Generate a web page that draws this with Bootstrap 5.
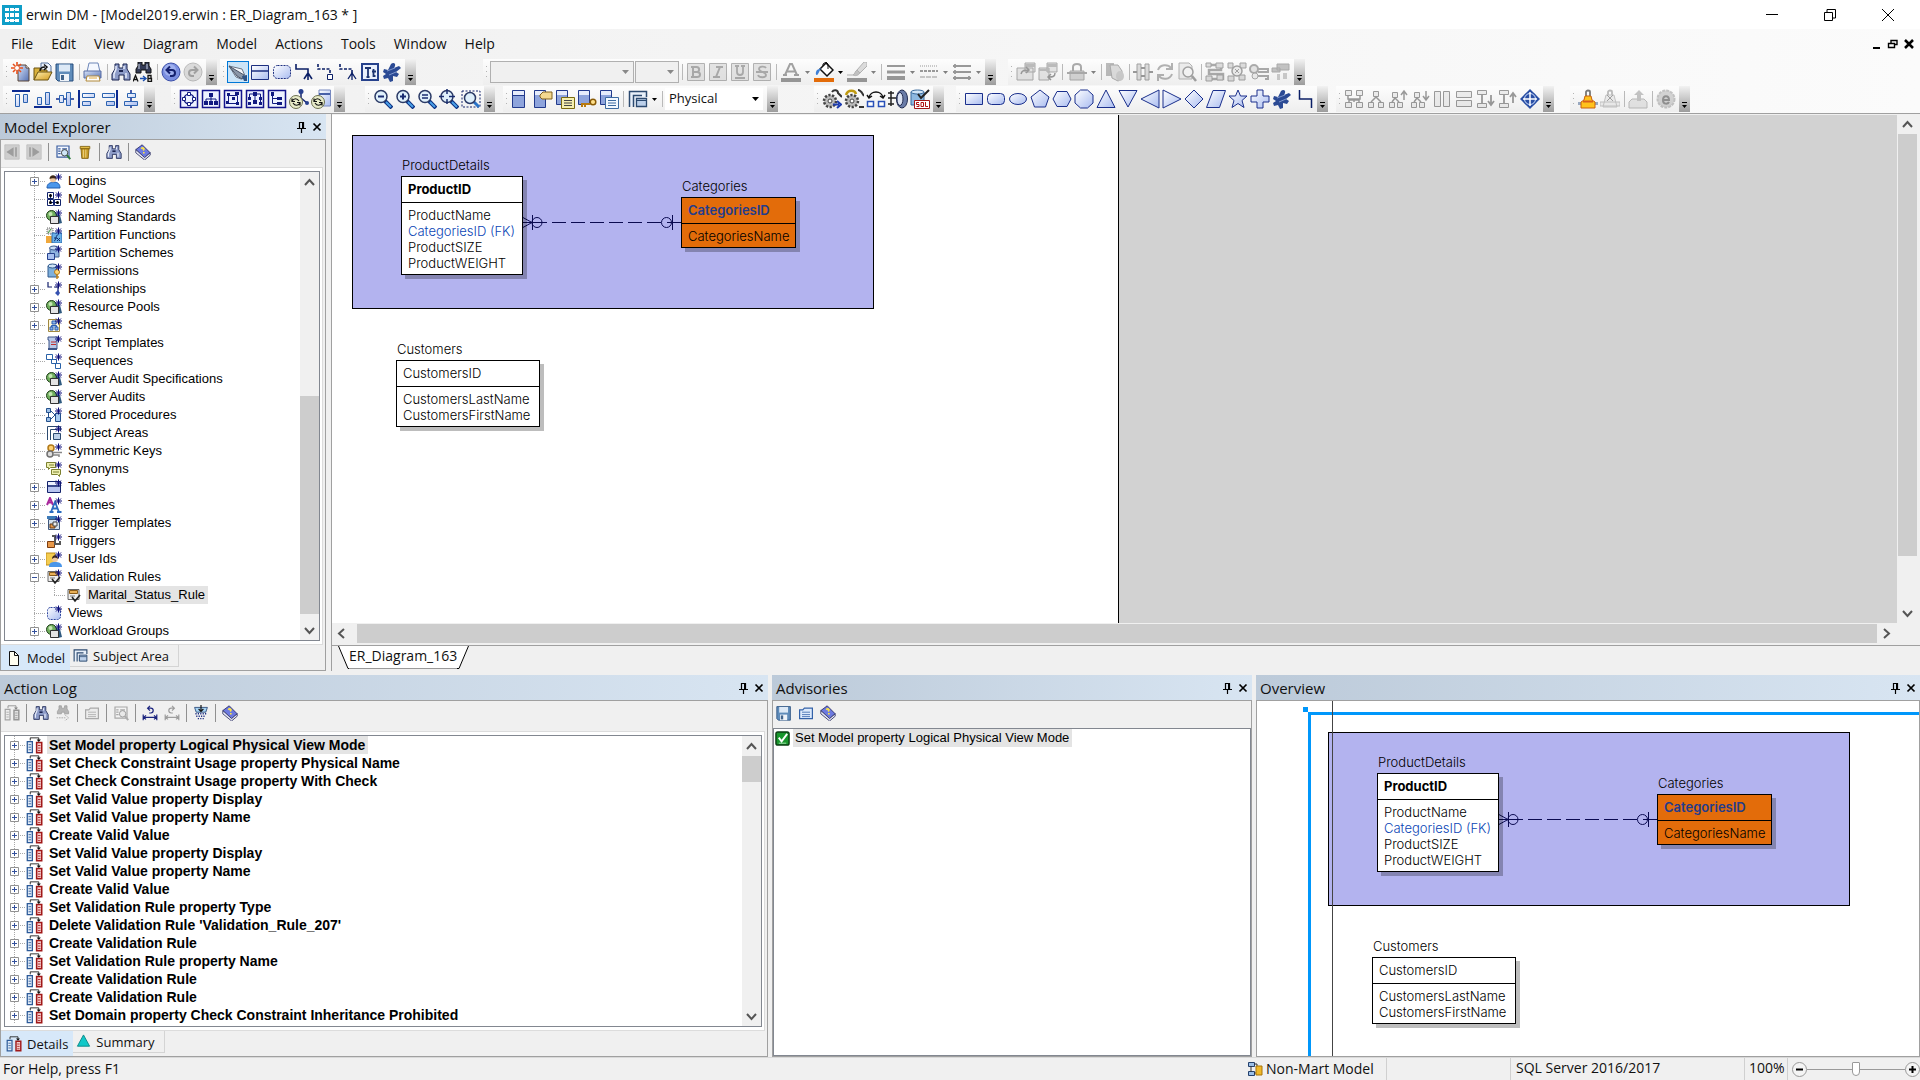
<!DOCTYPE html>
<html lang="en">
<head>
<meta charset="utf-8">
<meta name="viewport" content="width=device-width, initial-scale=1">
<title>erwin DM - [Model2019.erwin : ER_Diagram_163 * ]</title>
<link href="https://cdn.jsdelivr.net/npm/bootstrap@5.3.0/dist/css/bootstrap.min.css" rel="stylesheet">
<script src="https://cdn.jsdelivr.net/npm/bootstrap@5.3.0/dist/js/bootstrap.bundle.min.js"></script>
<style>
  :root { --face:#f0f0f0; --edge:#a0a0a0; --edge-dark:#828790; --ui:"Open Sans","Noto Sans",sans-serif; --list:"Liberation Sans",Arial,sans-serif; }
  body { background:var(--face); color:#111; font:14px/20px var(--ui); min-height:100vh; }
  button { color:inherit; font:inherit; background:none; border:0; padding:0; }
  svg { display:block; }

  .titlebar { background:#fff; height:29px; padding:0 3px 0 2px; }
  .titlebar h1 { font-size:14px; line-height:20px; font-weight:400; margin:0; }
  .win-ctl { width:58px; height:29px; }
  .chrome { background:linear-gradient(90deg,#f0f0f0,#fbfbfb); border-bottom:1px solid var(--edge); }
  .menubar { height:30px; padding:0 3px 0 2px; }
  .menubar a { color:#111; text-decoration:none; padding:0 9px; }
  .mdi-ctl { width:16px; height:16px; }

  .bar-row { height:27px; padding-left:3px; }
  .strip { height:26px; background:linear-gradient(#fdfdfd,#eeeeee); }
  .grip { width:7px; height:16px; background:radial-gradient(circle,#b4b4b4 1px,transparent 1px) 2px 0/3px 5px repeat-y; }
  .tool { width:22px; height:22px; }
  .tool.wide { width:33px; }
  .tool.picked { background:#cce4f7; outline:1px solid #0078d7; outline-offset:-1px; }
  .tool.off svg { filter:grayscale(1); opacity:.48; }
  .split { width:6px; height:16px; background:linear-gradient(#b9b9b9,#b9b9b9) center/1px 100% no-repeat; }
  .more { width:11px; height:26px; margin-left:2px; background:linear-gradient(#f2f2f2,#9c9c9c); }
  .g3 { margin-left:3px; } .g8 { margin-left:8px; } .g12 { margin-left:12px; } .g16 { margin-left:16px; } .g20 { margin-left:20px; } .g36 { margin-left:36px; } .g67 { margin-left:67px; }
  .combo { appearance:none; height:22px; border:1px solid #b0b0b0; border-radius:0; color:#111; font:13px/18px var(--ui); padding:0 4px 2px 3px; background:#f0f0f0 url("data:image/svg+xml,%3Csvg xmlns='http://www.w3.org/2000/svg' width='7' height='4'%3E%3Cpath d='M0 0h7L3.5 4z' fill='%23888'/%3E%3C/svg%3E") right 4px center no-repeat; }
  .combo.live { background:#fff url("data:image/svg+xml,%3Csvg xmlns='http://www.w3.org/2000/svg' width='7' height='4'%3E%3Cpath d='M0 0h7L3.5 4z' fill='%23000'/%3E%3C/svg%3E") right 3px center no-repeat; border-color:#fff; width:98px; margin-right:2px; opacity:1; }
  .w-face { width:144px; margin-right:1px; } .w-size { width:44px; }

  .pane-head { height:25px; background:linear-gradient(90deg,#bccad9,#d8e5f2); padding:0 1px 0 4px; }
  .pane-head h2 { font-size:15px; line-height:22px; font-weight:400; margin:0; }
  .pane-head button { width:16px; height:16px; }
  .pane-body { border:1px solid var(--edge); background:var(--face); }
  .mini { padding:0 0 3px; height:27px; }
  .mini.roomy { margin-bottom:3px; }
  .mini .tool { width:22px; }
  .mini .split { width:7px; height:18px; background-image:linear-gradient(#909090,#909090); }

  .explorer { width:326px; }
  .frame { background:#fff; border:1px solid #dcdcdc; border-left:0; padding:3px 2px 3px 3px; margin-right:2px; }
  .listbox { border:1px solid var(--edge-dark); background:#fff; font:13px/18px var(--list); color:#000; }
  .listbox ul { margin:0; padding:0; list-style:none; }
  .rowline { height:18px; white-space:nowrap; }
  .twig { width:16px; height:18px; padding-top:5px; background:
      repeating-linear-gradient(#a8a8a8 0 1px,transparent 1px 2px) 4px 0/1px 18px no-repeat,
      repeating-linear-gradient(90deg,#a8a8a8 0 1px,transparent 1px 2px) 4px 9px/12px 1px no-repeat; }
  .twig.thru { background:repeating-linear-gradient(#a8a8a8 0 1px,transparent 1px 2px) 4px 0/1px 18px no-repeat; }
  .twig.leaf { background:
      repeating-linear-gradient(#a8a8a8 0 1px,transparent 1px 2px) 4px 0/1px 10px no-repeat,
      repeating-linear-gradient(90deg,#a8a8a8 0 1px,transparent 1px 2px) 4px 9px/12px 1px no-repeat; }
  .caption { padding:0 3px 0 2px; }
  .picked-row .caption { background:#e4e4e4; }
  .adv-row { padding-left:1px; }
  .adv-row .caption { margin-left:3px; }
  .listbox .tree { padding-left:25px; }
  .listbox .log { padding-left:5px; font-weight:700; font-size:14px; }

  .vbar { width:19px; background:var(--face); }
  .desk-bar { margin:0 3px 0 1px; }
  .vbar button, .hbar button { width:19px; height:20px; }
  .hbar { height:19px; background:var(--face); margin:1px 24px 2px 0; }
  .thumb { background:#cdcdcd; }
  .spread-204 { flex:204 0 0; } .spread-219 { flex:219 0 0; } .spread-6 { flex:6 0 0; } .spread-419 { flex:419 0 0; } .spread-47 { flex:47 0 0; }
  .spread-26 { flex:26 0 0; } .spread-224 { flex:224 0 0; } .spread-1518 { flex:1518 0 0; }

  .pane-tab { font-size:13px; height:22px; border-right:1px solid #d4d4d4; border-bottom:1px solid #d4d4d4; padding:0 9px 0 3px; gap:5px; }
  .pane-tab.on { background:#d7e8f9; height:25px; border:0; padding:0 5px; }

  .canvas-pane { margin-left:5px; border-left:1px solid var(--edge); }
  .desk { background:#d2d2d2; margin-top:1px; }
  .paper { width:787px; background:#fff; border-right:1px solid #000; }
  .sheet-tabs { height:26px; border-top:1px solid var(--edge); padding-left:6px; }
  .sheet-tab span { background:#fff; border-bottom:1px solid #999; height:23px; line-height:20px; }

  .erd { position:absolute; width:522px; height:174px; background:#b3b3ef; border:1px solid #000; font:300 13px/16px Inter,"Open Sans",sans-serif; color:#000; }
  .at-page { left:20px; top:20px; }
  .at-view { left:71px; top:31px; }
  .entity { position:absolute; }
  .e-product { left:48px; top:21px; width:122px; }
  .e-category { left:328px; top:42px; width:115px; }
  .e-customer { left:43px; top:205px; width:144px; }
  .entity h3 { font:inherit; margin:0 0 3px 1px; }
  .sheet { border:1px solid #000; background:#fff; box-shadow:4px 4px 0 rgba(0,0,0,.26); }
  .sheet .keys { height:26px; line-height:24px; border-bottom:1px solid #000; padding-left:6px; }
  .sheet .cols { padding:4px 0 3px 6px; white-space:nowrap; }
  .fk { color:#0a45b5; }
  .orange { background:#e36c0a; }
  .orange .keys { color:#233c8c; font-weight:600; }
  .link-line { position:absolute; left:169px; top:79px; }

  .dock { gap:4px; margin-top:4px; height:382px; }
  .dock-log { flex:0 0 40%; } .dock-adv { flex:0 0 25%; }
  .mark-v { position:absolute; left:75px; top:0; bottom:0; width:1px; background:#444; }
  .view-box { position:absolute; left:51px; top:11px; right:0; bottom:0; border:solid #0097fb; border-width:3px 0 0 3px; }
  .view-dot { position:absolute; left:46px; top:6px; width:5px; height:5px; background:#0097fb; }

  .status { height:23px; border-top:1px solid #d9d9d9; padding-left:3px; }
  .status .cell { border-left:1px solid #d0d0d0; height:22px; }
  .s-mart { width:138px; } .s-gap { width:124px; } .s-db { width:234px; padding-left:5px; } .s-zoom { width:43px; padding-left:4px; }
  .zoom { appearance:none; width:98px; height:16px; background:linear-gradient(#9a9a9a,#9a9a9a) center/100% 1px no-repeat; margin:0; }
  .zoom::-webkit-slider-thumb { appearance:none; width:8px; height:14px; background:#fff; border:1px solid #999; border-radius:1px 1px 4px 4px; }
</style>
</head>
<body class="d-flex flex-column overflow-hidden">

<svg width="0" height="0" class="position-absolute" aria-hidden="true">
  <defs>
    <linearGradient id="gs" x1="0" y1="0" x2="1" y2="1"><stop offset="0" stop-color="#fff"/><stop offset="1" stop-color="#a9bcf0"/></linearGradient>
    <linearGradient id="gb" x1="0" y1="0" x2="1" y2="1"><stop offset="0" stop-color="#dbe6fa"/><stop offset="1" stop-color="#5470b4"/></linearGradient>
    <linearGradient id="gy" x1="0" y1="0" x2="1" y2="1"><stop offset="0" stop-color="#fff0b0"/><stop offset="1" stop-color="#d29a1c"/></linearGradient>
  </defs>
  <!-- standard -->
  <symbol id="new" viewBox="0 0 20 20"><path d="M7 3h8l3 3v13H7z" fill="url(#gb)" stroke="#5a4638"/><path d="M15 3v3h3" fill="#fff" stroke="#5a4638"/><path d="M6 0v12M0 6h12M2 2l8 8M10 2l-8 8" stroke="#e8501c" stroke-width="1.6"/><circle cx="6" cy="6" r="2" fill="#fff"/></symbol>
  <symbol id="open" viewBox="0 0 20 20"><path d="M8 1h7l3 3v8H8z" fill="#eef4ff" stroke="#55709c"/><path d="M1 18V6h6l1 2h6v2" fill="#d9b13c" stroke="#6a5310"/><path d="M1 18l4-8h14l-4 8z" fill="url(#gy)" stroke="#6a5310"/><path d="M7 9c0-3 2-4 5-4M11 2.500l3 2.500-3 3" fill="none" stroke="#111" stroke-width="1.500"/></symbol>
  <symbol id="save" viewBox="0 0 20 20"><path d="M1 2h17v17H3l-2-2z" fill="#5f8cba" stroke="#274d7c"/><path d="M4 2.500h11v7H4z" fill="#dde9f6"/><path d="M5 12h9v7H5z" fill="#eef3f9"/><path d="M6 13h3v5H6z" fill="#41648c"/></symbol>
  <symbol id="print" viewBox="0 0 20 20"><path d="M6 1h9l2 9H4z" fill="#f4f8ff" stroke="#6d86b8"/><path d="M1 9h17v7H1z" fill="url(#gb)" stroke="#5a6ea4"/><path d="M4 14h12l1 5H3z" fill="#fff" stroke="#b08838"/><path d="M6 16h8" stroke="#e0a83c"/></symbol>
  <symbol id="find" viewBox="0 0 20 20"><path d="M4 2h4v4h4V2h4v5l3 5v6h-6v-5H8v5H1v-6l3-5z" fill="#8d9cc8" stroke="#1b2450"/><path d="M5 4v3l-2 5v4M13 4v3M15 11v5" stroke="#e6ecfa" stroke-width="1.500" fill="none"/><path d="M8 9h4" stroke="#1b2450" stroke-width="2"/></symbol>
  <symbol id="replace" viewBox="0 0 20 20"><path d="M5 0h4v3h3V0h4v4l2 3v4h-5V8H8v3H3V7l2-3z" fill="#333a55" stroke="#111"/><path d="M6 2v5M14 2v5" stroke="#cfd8ee"/><path d="M0 19.500l2.500-6 2.500 6M1 17.500h3" fill="none" stroke="#111" stroke-width="1.300"/><path d="M15 13.500v6h3.500v-3H15h3v-3z" fill="none" stroke="#111" stroke-width="1.300"/><path d="M7 16.500h5M10 14l3 2.500-3 2.500" fill="none" stroke="#1a4fb0" stroke-width="1.400"/></symbol>
  <symbol id="undo" viewBox="0 0 20 20"><circle cx="10" cy="10" r="9" fill="#7a8ee0" stroke="#3a4ea8"/><circle cx="9" cy="8" r="6" fill="#b8c6f6" opacity=".6"/><path d="M6 8h5c4 0 4 6 0 6H9M9 4.500L5.500 8 9 11.500" fill="none" stroke="#14206e" stroke-width="2"/></symbol>
  <symbol id="redo" viewBox="0 0 20 20"><circle cx="10" cy="10" r="9" fill="#bbb" stroke="#777"/><path d="M14 8H9c-4 0-4 6 0 6h2M11 4.500L14.500 8 11 11.500" fill="none" stroke="#444" stroke-width="2"/></symbol>
  <!-- toolbox -->
  <symbol id="pointer" viewBox="0 0 20 20"><path d="M1 4l13 3 4 9-5 1-5-2z" fill="#f4f6fa" stroke="#6a7484"/><path d="M1 4l8 10 5 3 2-4-5-3z" fill="#8b97a8" stroke="#4a5568"/><path d="M14 14l5-1v6h-3z" fill="#2f5486"/></symbol>
  <symbol id="table" viewBox="0 0 20 20"><path d="M1.500 3.500h17v14h-17z" fill="url(#gs)" stroke="#1d2f80"/><path d="M2 9h16" stroke="#1d2f80" stroke-width="1.500"/></symbol>
  <symbol id="view" viewBox="0 0 20 20"><rect x="1.500" y="3.500" width="17" height="13" rx="4" fill="url(#gs)" stroke="#1d2f80" stroke-dasharray="2 1"/></symbol>
  <symbol id="rel1" viewBox="0 0 20 20"><path d="M2 2v5h12v5M10 17l4-6 4 6M14 12v6" fill="none" stroke="#0b1f66" stroke-width="1.600"/></symbol>
  <symbol id="rel2" viewBox="0 0 20 20"><path d="M2 2v5h12v5" fill="none" stroke="#0b1f66" stroke-width="1.600" stroke-dasharray="3 1.500"/><path d="M11.500 12.500h5v5h-5z" fill="#fff" stroke="#0b1f66"/></symbol>
  <symbol id="rel3" viewBox="0 0 20 20"><path d="M2 2v5h12v4" fill="none" stroke="#0b1f66" stroke-width="1.600" stroke-dasharray="3 1.500"/><path d="M10 17l4-6 4 6M14 12v6" fill="none" stroke="#0b1f66" stroke-width="1.300"/></symbol>
  <symbol id="text" viewBox="0 0 20 20"><path d="M2 2h16v16H2z" fill="#eaf0fc" stroke="#26418c" stroke-width="2"/><path d="M5 6h6M8 6v9M6.500 15h3M13.500 7v7h2M12 9.500h4" stroke="#1d3470" stroke-width="1.800" fill="none"/></symbol>
  <symbol id="anno" viewBox="0 0 20 20"><path d="M9 2c2-2 5-1 4 2l-1 2 5-2 2 2-5 4 3 2-2 3-4-1 0 5-3 1-2-4-4 1-1-3 3-2-3-2 1-3 4 1z" fill="#2b4a94"/><path d="M5 9l8-3M7 13l7-3" stroke="#7f97cc"/></symbol>
  <!-- font bar -->
  <symbol id="bold" viewBox="0 0 20 20"><path d="M1.500 1.500h17v17h-17z" fill="#ccc" stroke="#666"/><path d="M7 5v10h4c4 0 4-5 0-5H7h3.500c3.500 0 3.500-5 0-5zM5 5h3M5 15h3" fill="none" stroke="#555" stroke-width="2"/></symbol>
  <symbol id="italic" viewBox="0 0 20 20"><path d="M1.500 1.500h17v17h-17z" fill="#ccc" stroke="#666"/><path d="M8 5h7M5 15h7M12 5L8 15" stroke="#555" stroke-width="2"/></symbol>
  <symbol id="underline" viewBox="0 0 20 20"><path d="M1.500 1.500h17v17h-17z" fill="#ccc" stroke="#666"/><path d="M5 4h4M11 4h4M7 4v6c0 4 6 4 6 0V4M5 16h10" stroke="#555" stroke-width="1.800" fill="none"/></symbol>
  <symbol id="strike" viewBox="0 0 20 20"><path d="M1.500 1.500h17v17h-17z" fill="#ccc" stroke="#666"/><path d="M14 6c-1-2-7-2-7 1s7 3 7 6-7 3-8 0M4 10h12" stroke="#555" stroke-width="1.800" fill="none"/></symbol>
  <symbol id="fontcolor" viewBox="0 0 20 20"><path d="M0 16h20v4H0z" fill="#333"/><path d="M4 13l5-11h2l5 11M6 9.500h8M2 13h4M13 13h5" stroke="#444" stroke-width="2" fill="none"/></symbol>
  <symbol id="fill" viewBox="0 0 20 20"><path d="M0 16h20v4H0z" fill="#e36c0a"/><path d="M6 7l6-6 7 7-6 6z" fill="#fff" stroke="#111" stroke-width="1.500"/><path d="M9 4V2l3-2 2 2v5" fill="none" stroke="#111"/><path d="M3 8c-2 3-1 5 0 5s3-5 4-7z" fill="#3d7fd6"/></symbol>
  <symbol id="brush" viewBox="0 0 20 20"><path d="M0 16h20v4H0z" fill="#333"/><path d="M10 8l7-8h3v4l-7 7z" fill="#bbb" stroke="#666"/><path d="M10 8l3 3c-2 3-5 3-7 2 2-1 2-4 4-5zM0 13h6" fill="#888" stroke="#666"/></symbol>
  <symbol id="lines" viewBox="0 0 20 20"><path d="M1 4h18" stroke="#333" stroke-width="2"/><path d="M1 10h18" stroke="#333" stroke-width="3"/><path d="M1 16h18" stroke="#333" stroke-width="4"/></symbol>
  <symbol id="dashes" viewBox="0 0 20 20"><path d="M1 4h18" stroke="#333" stroke-dasharray="1 1"/><path d="M1 9h18" stroke="#333" stroke-width="2" stroke-dasharray="3 1"/><path d="M1 15h18" stroke="#333" stroke-width="1" stroke-dasharray="5 1"/></symbol>
  <symbol id="ends" viewBox="0 0 20 20"><path d="M1 4h18M1 10h18M1 16h18M3 2v4M3 8v4M17 14v4M3 14v4" stroke="#333" stroke-width="1.800"/></symbol>
  <!-- grey groups -->
  <symbol id="fwd" viewBox="0 0 20 20"><path d="M9 1h10v9H9zM1 6h16v12H1z" fill="#ccc" stroke="#555"/><path d="M9 2h10v3H9z" fill="#777"/><path d="M5 12c1-4 4-4 7-4M10 5l3 3-3 3" fill="none" stroke="#333" stroke-width="1.500"/></symbol>
  <symbol id="back" viewBox="0 0 20 20"><path d="M9 1h10v9H9zM1 6h10v12H1z" fill="#ccc" stroke="#555"/><path d="M9 2h10v3H9zM1 7h10v2H1z" fill="#777"/><path d="M17 11c0 4-3 4-6 4M13 12l-3 3 3 3" fill="none" stroke="#333" stroke-width="1.500"/></symbol>
  <symbol id="lockg" viewBox="0 0 20 20"><path d="M6 9V5c0-4 8-4 8 0v4" fill="none" stroke="#555" stroke-width="2"/><path d="M3 9h14v9H3z" fill="#aaa" stroke="#555"/><path d="M0 11h20" stroke="#555" stroke-width="2"/></symbol>
  <symbol id="shield" viewBox="0 0 20 20"><path d="M1 1h8v13H1z" fill="#777"/><path d="M5 3h8l4 6v8l-4 2-6-3z" fill="#bbb" stroke="#555"/><ellipse cx="15" cy="14" rx="4" ry="5" fill="#999"/></symbol>
  <symbol id="cmp" viewBox="0 0 20 20"><path d="M4 2h4v16H4zM12 2h4v16h-4z" fill="#bbb" stroke="#444"/><path d="M0 10h4M16 10h4M8 6h4M8 14h4" stroke="#333" stroke-width="2"/></symbol>
  <symbol id="sync" viewBox="0 0 20 20"><path d="M3 8c2-6 10-6 13-2M17 1v6h-6M17 12c-2 6-10 6-13 2M3 19v-6h6" fill="none" stroke="#666" stroke-width="2"/></symbol>
  <symbol id="look" viewBox="0 0 20 20"><path d="M2 1h10l3 3v13H2z" fill="#ddd" stroke="#666"/><circle cx="11" cy="10" r="5" fill="#eee" stroke="#444" stroke-width="1.500"/><path d="M15 14l4 5" stroke="#444" stroke-width="2.500"/></symbol>
  <symbol id="net1" viewBox="0 0 20 20"><path d="M2 3h14v5H4v4h14v5H3" fill="none" stroke="#555" stroke-width="2.500"/><path d="M1 1h5v4H1zM11 1h7v5h-7zM1 14h6v5H1zM12 13h6v5h-6z" fill="#bbb" stroke="#444"/></symbol>
  <symbol id="net2" viewBox="0 0 20 20"><path d="M1 1h5v5H1zM13 1h6v5h-6zM1 14h6v5H1zM12 13h6v5h-6z" fill="#bbb" stroke="#444"/><circle cx="10" cy="9" r="5" fill="#ddd" stroke="#444" stroke-width="1.500"/><path d="M8 7l4 4M12 7l-4 4" stroke="#444"/></symbol>
  <symbol id="keyg" viewBox="0 0 20 20"><circle cx="5" cy="7" r="4" fill="#ccc" stroke="#555" stroke-width="2"/><path d="M8 7h11v3H9M5 14h14v3h-3" fill="none" stroke="#555" stroke-width="2"/><circle cx="6" cy="14" r="3" fill="#ddd" stroke="#555"/></symbol>
  <symbol id="tree4" viewBox="0 0 20 20"><path d="M6 2h12v6H6zM1 6h8v4H1z" fill="#888" stroke="#555"/><path d="M6 12h3v6H6zM12 11h4v6h-4z" fill="#999"/></symbol>
  <!-- align -->
  <symbol id="al-t" viewBox="0 0 20 20"><path d="M1 2h18" stroke="#0c2a90" stroke-width="2"/><path d="M4.500 5.500h4v12h-4zM12.500 5.500h4v8h-4z" fill="url(#gs)" stroke="#2c63b0"/></symbol>
  <symbol id="al-b" viewBox="0 0 20 20"><path d="M1 18h18" stroke="#0c2a90" stroke-width="2"/><path d="M4.500 8.500h4v7h-4zM12.500 3.500h4v12h-4z" fill="url(#gs)" stroke="#2c63b0"/></symbol>
  <symbol id="al-m" viewBox="0 0 20 20"><path d="M1 10h18" stroke="#0c2a90" stroke-width="1.500"/><path d="M4.500 6.500h4v7h-4zM11.500 3.500h4v13h-4z" fill="url(#gs)" stroke="#2c63b0"/></symbol>
  <symbol id="al-l" viewBox="0 0 20 20"><path d="M2 1v18" stroke="#0c2a90" stroke-width="2"/><path d="M5.500 4.500h12v4h-12zM5.500 12.500h8v4h-8z" fill="url(#gs)" stroke="#2c63b0"/></symbol>
  <symbol id="al-r" viewBox="0 0 20 20"><path d="M18 1v18" stroke="#0c2a90" stroke-width="2"/><path d="M3.500 4.500h12v4h-12zM7.500 12.500h8v4h-8z" fill="url(#gs)" stroke="#2c63b0"/></symbol>
  <symbol id="al-c" viewBox="0 0 20 20"><path d="M10 1v18" stroke="#0c2a90" stroke-width="1.500"/><path d="M6.500 4.500h8v4h-8zM3.500 12.500h13v4h-13z" fill="url(#gs)" stroke="#2c63b0"/></symbol>
  <!-- layout -->
  <symbol id="boxf" viewBox="0 0 20 20"><path d="M1.500 1.500h17v17h-17z" fill="#eef2ff" stroke="#14148c" stroke-width="1.500"/></symbol>
  <symbol id="ly1" viewBox="0 0 20 20"><use href="#boxf"/><circle cx="10" cy="10" r="5" fill="none" stroke="#111a80" stroke-width="1.200"/><path d="M8.500 3.500h3v3h-3zM8.500 13.500h3v3h-3zM3.500 8.500h3v3h-3zM13.500 8.500h3v3h-3z" fill="#fff" stroke="#111a80"/></symbol>
  <symbol id="ly2" viewBox="0 0 20 20"><use href="#boxf"/><path d="M8 4h4v4H8zM3 12h4v4H3zM8 12h4v4H8zM13 12h4v4h-4z" fill="#111a80"/><path d="M10 7v5M5 12v-2h10v2" fill="none" stroke="#111a80"/></symbol>
  <symbol id="ly3" viewBox="0 0 20 20"><use href="#boxf"/><path d="M4 4h3v3H4zM12 3h4v3h-4zM3 12h3v3H3zM9 8h3v3H9zM13 13h3v3h-3z" fill="#111a80"/><path d="M5.500 6.500h9v8h-9z" fill="none" stroke="#111a80"/></symbol>
  <symbol id="ly4" viewBox="0 0 20 20"><use href="#boxf"/><path d="M8 3h4v4H8zM3 8h3v3H3zM14 8h3v3h-3zM3 13h3v3H3zM8 11h4v4H8zM14 13h3v3h-3z" fill="#111a80"/><path d="M4.500 9V5h11v9M10 5v7" fill="none" stroke="#111a80"/></symbol>
  <symbol id="ly5" viewBox="0 0 20 20"><use href="#boxf"/><path d="M4 3h3v4H4zM10 8h5v3h-5zM10 13h5v3h-5z" fill="#111a80"/><path d="M5.500 6v8.500H12M5.500 9.500H12" fill="none" stroke="#111a80"/></symbol>
  <symbol id="swirl" viewBox="0 0 20 20"><circle cx="7" cy="13" r="6.500" fill="#e9ecc9" stroke="#6c7050"/><path d="M3 12c2-3 5-3 7 0M11 14c-2 3-5 3-7 0M3 9.500v3h3M11 16.500v-3H8" fill="none" stroke="#111" stroke-width="1.200"/></symbol>
  <symbol id="ly6" viewBox="0 0 20 20"><path d="M12 3v6l6 5" stroke="#12236e" stroke-width="1.500" fill="none"/><circle cx="12" cy="2.500" r="2.500" fill="#28408f"/><circle cx="18" cy="14" r="2" fill="#28408f"/><use href="#swirl"/></symbol>
  <symbol id="ly7" viewBox="0 0 20 20"><path d="M8 1h11.500v16H8z" fill="url(#gs)" stroke="#7688bf"/><path d="M8 5h11" stroke="#4860a8" stroke-width="2"/><use href="#swirl"/></symbol>
  <!-- zoom -->
  <symbol id="lens" viewBox="0 0 20 20"><path d="M12 12l7 7" stroke="#0b2f80" stroke-width="4"/><path d="M13 13l5 5" stroke="#4aa0e8" stroke-width="2"/><circle cx="8" cy="7.500" r="6" fill="#dff0fb" stroke="#2b3a66" stroke-width="1.500"/></symbol>
  <symbol id="z-out" viewBox="0 0 20 20"><use href="#lens"/><path d="M5 7.500h6" stroke="#1a2c70" stroke-width="2"/></symbol>
  <symbol id="z-in" viewBox="0 0 20 20"><use href="#lens"/><path d="M5 7.500h6M8 4.500v6" stroke="#1a2c70" stroke-width="2"/></symbol>
  <symbol id="z-100" viewBox="0 0 20 20"><use href="#lens"/><path d="M5 6h6M5 9h6" stroke="#1a2c70" stroke-width="1.300"/></symbol>
  <symbol id="z-fit" viewBox="0 0 20 20"><use href="#lens"/><path d="M8 0v5M8 10v5M0 7.500h5M10 7.500h6" stroke="#1a2c70" stroke-width="1.500"/></symbol>
  <symbol id="z-sel" viewBox="0 0 20 20"><path d="M1 2h18v16H1z" fill="none" stroke="#14246c" stroke-dasharray="2 1.500"/><path d="M13 13l5 5" stroke="#2a74c8" stroke-width="3"/><circle cx="9" cy="9" r="5.500" fill="#dff0fb" stroke="#2b3a66" stroke-width="1.500"/></symbol>
  <!-- display -->
  <symbol id="ent" viewBox="0 0 20 20"><path d="M1.500 1.500h12v17h-12z" fill="#8ea4dc" stroke="#223a8c"/><path d="M2 2h11v4H2z" fill="#e6ecfb"/><path d="M2 6.500h11" stroke="#223a8c"/></symbol>
  <symbol id="ent2" viewBox="0 0 20 20"><path d="M1.500 1.500h11v17h-11z" fill="#8ea4dc" stroke="#223a8c"/><path d="M2 2h10v4H2z" fill="#e6ecfb"/><path d="M7 6l3-3h9v7H9L7 8z" fill="#f3d890" stroke="#80601c"/></symbol>
  <symbol id="ent3" viewBox="0 0 20 20"><path d="M1.500 1.500h11v14h-11z" fill="#8ea4dc" stroke="#223a8c"/><path d="M2 2h10v4H2z" fill="#e6ecfb"/><path d="M6.500 8.500h13v11h-13z" fill="#f5efb0" stroke="#7a6a10"/><path d="M9 11.500h8M9 14h8M9 16.500h8" stroke="#444"/></symbol>
  <symbol id="ent4" viewBox="0 0 20 20"><path d="M1.500 1.500h11v14h-11z" fill="#8ea4dc" stroke="#223a8c"/><path d="M2 2h10v4H2z" fill="#e6ecfb"/><circle cx="16" cy="13" r="2.800" fill="#ffe08a" stroke="#8a5c08" stroke-width="1.500"/><path d="M13 15H5v3M8 15v3" stroke="#b87a10" stroke-width="2" fill="none"/></symbol>
  <symbol id="ent5" viewBox="0 0 20 20"><path d="M1.500 1.500h11v14h-11z" fill="#8ea4dc" stroke="#223a8c"/><path d="M2 2h10v4H2z" fill="#e6ecfb"/><path d="M6.500 8.500h13v11h-13z" fill="#f2f8ff" stroke="#3c6aa0"/><path d="M9 11.500h8M9 14h8M9 16.500h8" stroke="#3c6aa0"/></symbol>
  <symbol id="area" viewBox="0 0 20 20"><path d="M1.500 18V2.500h17V8M5.500 18V6.500H14" fill="#e8f0fa" stroke="#2c4a70" stroke-width="1.500"/><path d="M8.500 9.500h10v8h-10z" fill="#bcd0ea" stroke="#2c4a70" stroke-width="1.300"/><path d="M9 11.500h9" stroke="#2c4a70"/></symbol>
  <!-- database -->
  <symbol id="cog" viewBox="0 0 20 20"><circle cx="8" cy="12" r="6" fill="#bbb" stroke="#444" stroke-width="2.500" stroke-dasharray="2.200 1.500"/><circle cx="8" cy="12" r="2" fill="#fff" stroke="#444"/></symbol>
  <symbol id="db1" viewBox="0 0 20 20"><use href="#cog"/><path d="M10 3c2-3 6-2 6 1l4 4" fill="none" stroke="#333" stroke-width="2"/><path d="M11 15.500h6M15 12l4 3.500-4 3.500" fill="none" stroke="#1d3cb0" stroke-width="2"/></symbol>
  <symbol id="db2" viewBox="0 0 20 20"><use href="#cog"/><path d="M2 6c2-6 9-5 10-1" fill="none" stroke="#c09a10" stroke-width="2.500"/><path d="M14 1c3 0 4 3 6 6M15 18h5" fill="none" stroke="#333" stroke-width="2" /></symbol>
  <symbol id="db3" viewBox="0 0 20 20"><path d="M3 9c1-8 13-8 14 0M1 6l2 3 3-2M19 6l-2 3-3-2" fill="none" stroke="#111" stroke-width="1.500"/><path d="M1.500 12.500h6v5h-6zM12.500 12.500h6v5h-6z" fill="#fff" stroke="#2850b8" stroke-width="1.500"/></symbol>
  <symbol id="db4" viewBox="0 0 20 20"><path d="M0 4h6M0 9h8M0 15h6M3 2v15" stroke="#222" stroke-width="1.500"/><ellipse cx="14" cy="10" rx="5.500" ry="9" fill="#6a7ca8" stroke="#222c50"/><ellipse cx="12" cy="10" rx="3" ry="6.500" fill="#dde4f4" stroke="#222c50"/></symbol>
  <symbol id="db5" viewBox="0 0 20 20"><path d="M1 3h13v13H1z" fill="#8db8e0" stroke="#3a6a9c"/><ellipse cx="7.500" cy="3" rx="6.500" ry="2" fill="#cfe4f6" stroke="#3a6a9c"/><path d="M8 5l3 4 8-8" fill="none" stroke="#222" stroke-width="2"/><path d="M4.500 11.500h15v8h-15z" fill="#fff" stroke="#a01818"/><path d="M9 13.500H6.500v2H9v2H6.500M11 13.500h2.500v4H11zM15.500 13v4.500H18" fill="none" stroke="#b01010"/></symbol>
  <!-- drawing shapes -->
  <symbol id="sh-rect" viewBox="0 0 20 20"><path d="M1.500 4.500h17v11h-17z" fill="url(#gs)" stroke="#1a2f8c"/></symbol>
  <symbol id="sh-round" viewBox="0 0 20 20"><rect x="1.500" y="4.500" width="17" height="11" rx="4" fill="url(#gs)" stroke="#1a2f8c"/></symbol>
  <symbol id="sh-oval" viewBox="0 0 20 20"><ellipse cx="10" cy="10" rx="8.500" ry="5.500" fill="url(#gs)" stroke="#1a2f8c"/></symbol>
  <symbol id="sh-pent" viewBox="0 0 20 20"><path d="M10 1l9 7-3.500 10h-11L1 8z" fill="url(#gs)" stroke="#1a2f8c"/></symbol>
  <symbol id="sh-hex" viewBox="0 0 20 20"><path d="M5 2.500h10l4 7.500-4 7.500H5L1 10z" fill="url(#gs)" stroke="#1a2f8c"/></symbol>
  <symbol id="sh-oct" viewBox="0 0 20 20"><path d="M6.500 1h7L19 6v8l-5.500 5h-7L1 14V6z" fill="url(#gs)" stroke="#1a2f8c"/></symbol>
  <symbol id="sh-up" viewBox="0 0 20 20"><path d="M10 1l9 17.500H1z" fill="url(#gs)" stroke="#1a2f8c"/></symbol>
  <symbol id="sh-down" viewBox="0 0 20 20"><path d="M10 18L1 1.500h18z" fill="url(#gs)" stroke="#1a2f8c"/></symbol>
  <symbol id="sh-left" viewBox="0 0 20 20"><path d="M1 10l18-9v18z" fill="url(#gs)" stroke="#1a2f8c"/></symbol>
  <symbol id="sh-right" viewBox="0 0 20 20"><path d="M19 10L1 1v18z" fill="url(#gs)" stroke="#1a2f8c"/></symbol>
  <symbol id="sh-dia" viewBox="0 0 20 20"><path d="M10 1l9 9-9 9-9-9z" fill="url(#gs)" stroke="#1a2f8c"/></symbol>
  <symbol id="sh-para" viewBox="0 0 20 20"><path d="M7 1.500h12.500l-6 17H.5z" fill="url(#gs)" stroke="#1a2f8c"/></symbol>
  <symbol id="sh-star" viewBox="0 0 20 20"><path d="M10 1l2.500 6H19l-5 4.500 2 7-6-4-6 4 2-7L1 7h6.500z" fill="url(#gs)" stroke="#1a2f8c"/></symbol>
  <symbol id="sh-plus" viewBox="0 0 20 20"><path d="M7 1h6v6h6v6h-6v6H7v-6H1V7h6z" fill="url(#gs)" stroke="#1a2f8c"/></symbol>
  <symbol id="sh-elbow" viewBox="0 0 20 20"><path d="M5.500 1v9h12v9" fill="none" stroke="#0b1f66" stroke-width="1.500"/></symbol>
  <!-- arrange -->
  <symbol id="ar1" viewBox="0 0 20 20"><path d="M1.500 1.500h6v5h-6zM12.500 1.500h6v5h-6zM1.500 13.500h6v5h-6zM12.500 13.500h6v5h-6z" fill="#ddd" stroke="#333"/><path d="M4 7v3h12V7M10 10v3M5 13v-2h10v2" fill="none" stroke="#333" stroke-width="1.500"/></symbol>
  <symbol id="ar2" viewBox="0 0 20 20"><path d="M7.500 2.500h5v5h-5zM2.500 13.500h5v5h-5zM12.500 13.500h5v5h-5z" fill="#ddd" stroke="#333"/><path d="M10 8l-5 5M10 8l5 5" stroke="#333" stroke-width="1.500"/></symbol>
  <symbol id="ar3" viewBox="0 0 20 20"><path d="M4.500 3.500h5v5h-5zM1.500 13.500h5v5h-5zM9.500 13.500h5v5h-5z" fill="#ddd" stroke="#333"/><path d="M7 9l-3 4M7 9l4 4M16 11V3M13 6l3-4 3 4" fill="none" stroke="#333" stroke-width="1.500"/></symbol>
  <symbol id="ar4" viewBox="0 0 20 20"><path d="M4.500 3.500h5v5h-5zM1.500 13.500h5v5h-5zM9.500 13.500h5v5h-5z" fill="#ddd" stroke="#333"/><path d="M7 9l-3 4M7 9l4 4M16 2v8M13 7l3 4 3-4" fill="none" stroke="#333" stroke-width="1.500"/></symbol>
  <symbol id="ar5" viewBox="0 0 20 20"><path d="M2.500 2.500h6v15h-6zM11.500 2.500h6v15h-6z" fill="#ddd" stroke="#333"/></symbol>
  <symbol id="ar6" viewBox="0 0 20 20"><path d="M2.500 2.500h15v6h-15zM2.500 11.500h15v6h-15z" fill="#ddd" stroke="#333"/></symbol>
  <symbol id="ar7" viewBox="0 0 20 20"><path d="M1.500 1.500h9v4h-9zM1.500 14.500h9v4h-9z" fill="#ddd" stroke="#333"/><path d="M6 6v8M15 6v9M12 12l3 4 3-4" fill="none" stroke="#333" stroke-width="1.800"/></symbol>
  <symbol id="ar8" viewBox="0 0 20 20"><path d="M1.500 1.500h9v4h-9zM1.500 14.500h9v4h-9z" fill="#ddd" stroke="#333"/><path d="M6 6v8M15 14V5M12 8l3-4 3 4" fill="none" stroke="#333" stroke-width="1.800"/></symbol>
  <symbol id="target" viewBox="0 0 20 20"><path d="M10 0l10 10-10 10L0 10z" fill="#2a4fa4"/><circle cx="10" cy="10" r="7" fill="#2a4fa4"/><circle cx="10" cy="10" r="5.500" fill="none" stroke="#cfe0ff"/><path d="M10 3v14M3 10h14" stroke="#fff" stroke-width="1.500"/></symbol>
  <!-- mart -->
  <symbol id="m-lock" viewBox="0 0 20 20"><path d="M8 8V3c0-2 4-2 4 0v5" fill="none" stroke="#777" stroke-width="1.800"/><path d="M0 13h20v3H0z" fill="#98a8c0"/><path d="M7 7h6l1 4 3 2v6H3v-6l3-2z" fill="#ffc21c" stroke="#c8600c"/><path d="M5 12.500h10" stroke="#d8601c" stroke-width="2"/></symbol>
  <symbol id="m-free" viewBox="0 0 20 20"><path d="M8 8V3c0-2 4-2 4 0v5" fill="none" stroke="#777" stroke-width="1.800"/><path d="M0 13h20v4H0zM6 6h8l3 12H3z" fill="#ddd" stroke="#888"/><path d="M7 6l6 6M13 6l-6 6" stroke="#444"/></symbol>
  <symbol id="m-up" viewBox="0 0 20 20"><path d="M1 13l3-3h12l3 3v6H1z" fill="#ccc" stroke="#777"/><path d="M9 12V6H6l5-5 5 5h-3v6z" fill="#888"/></symbol>
  <symbol id="m-c" viewBox="0 0 20 20"><circle cx="10" cy="10" r="8.500" fill="#aaa" stroke="#888" stroke-width="2" stroke-dasharray="3 1"/><path d="M7 11h6c0-5-6-5-6 0s5 4 6 2" fill="none" stroke="#222" stroke-width="2"/></symbol>
  <!-- pane tools -->
  <symbol id="prev" viewBox="0 0 20 20"><path d="M1 1h18v18H1z" fill="#aaa" stroke="#888"/><path d="M3 10l9-6v12zM14 4h2v12h-2z" fill="#444"/></symbol>
  <symbol id="next" viewBox="0 0 20 20"><path d="M1 1h18v18H1z" fill="#aaa" stroke="#888"/><path d="M17 10L8 4v12zM4 4h2v12H4z" fill="#444"/></symbol>
  <symbol id="props" viewBox="0 0 20 20"><path d="M2.500 2.500h15v14h-15z" fill="#f4f8ff" stroke="#3a5ea0" stroke-width="1.500"/><path d="M4 6h3M4 9h3M4 12h3M9 6h6" stroke="#3a5ea0" stroke-width="1.500"/><circle cx="12" cy="11" r="4" fill="#cfe6f6" stroke="#222"/><path d="M15 14l4 5" stroke="#2c7a3c" stroke-width="2.500"/></symbol>
  <symbol id="trash" viewBox="0 0 20 20"><path d="M4 3h12v3H4z" fill="#e2bc48" stroke="#7a5a08"/><path d="M5 6h10l-1 12H6z" fill="#c79a24" stroke="#7a5a08"/><path d="M8 7v10M11 7v10" stroke="#f6e09a"/></symbol>
  <symbol id="help" viewBox="0 0 20 20"><path d="M1 7l8-6 10 10-7 6z" fill="#6d7ae0" stroke="#23265c"/><path d="M1 7v4l11 9 7-6v-3l-7 6z" fill="#e8eaf8" stroke="#23265c"/><path d="M8 6c1-2 4-1 3 1l-1 1M11 10v2" stroke="#ffe640" stroke-width="2" fill="none"/></symbol>
  <symbol id="logi" viewBox="0 0 20 20"><path d="M1.500 5.500h6v13h-6z" fill="#e0ebf8" stroke="#2c5a98" stroke-width="1.500"/><path d="M12.500 6.500h6v12h-6z" fill="#f6cccc" stroke="#a01818" stroke-width="1.800"/><path d="M3 9h3M3 12h3M3 15h3" stroke="#2c5a98"/><path d="M14 10h3M14 13h3M14 16h3" stroke="#a01818"/><path d="M5 4V1h10v3" fill="none" stroke="#111"/><path d="M12.500 3h5L15 6z" fill="#111"/></symbol>
  <symbol id="findn" viewBox="0 0 20 20"><path d="M5 1h3v3h4V1h3v4l2 3v3h-5V9H8v2H3V8l2-3z" fill="#777" stroke="#444"/><path d="M2 16h12M12 12l5 4-5 4" fill="none" stroke="#444" stroke-dasharray="2 1"/></symbol>
  <symbol id="note" viewBox="0 0 20 20"><path d="M2 6h4l2-2h10v13H2z" fill="#ddeafc" stroke="#3462a8" stroke-width="1.500"/><path d="M5 9h10M5 12h10M5 14.500h10" stroke="#3462a8"/></symbol>
  <symbol id="lund" viewBox="0 0 20 20"><path d="M1.500 12v7M18.500 12v7M2 15.500h16M5 13l-3 2.500L5 18M15 13l3 2.500-3 2.500M7 4h4c4 0 4 6 0 6H9M10 1L7 4l3 3" fill="none" stroke="#1a237e" stroke-width="1.500"/></symbol>
  <symbol id="lred" viewBox="0 0 20 20"><path d="M1.500 12v7M18.500 12v7M2 15.500h16M5 13l-3 2.500L5 18M15 13l3 2.500-3 2.500M13 4H9C5 4 5 10 9 10h2M10 1l3 3-3 3" fill="none" stroke="#444" stroke-width="1.500"/></symbol>
  <symbol id="filter" viewBox="0 0 20 20"><path d="M2 3h16l-2 6H4z" fill="#a8d4f4" stroke="#1c3c70"/><path d="M10 0v8M7 5l3 3 3-3" stroke="#111" stroke-width="1.500" fill="none"/><path d="M3 11h14M4 14h12M6 17h8" stroke="#1c2c80" stroke-width="1.800" stroke-dasharray="1.500 1.500"/></symbol>
  <!-- tree objects, 16px grid -->
  <symbol id="star8" viewBox="0 0 16 16"><path d="M12.500.5v7M9 4h7M10 1.500l5 5M15 1.500l-5 5" stroke="#0c0c78" stroke-width="1"/></symbol>
  <symbol id="t-user" viewBox="0 0 16 16"><path d="M1 15c0-4 2-5 6-6 5 0 7 2 7 6z" fill="#4a96ea" stroke="#1f5cb0"/><circle cx="7" cy="6" r="3.200" fill="#f0c8a0"/><path d="M3.500 6c0-5 7-5 7 0-2-1-5-1-7 0z" fill="#3c2818"/></symbol>
  <symbol id="t-src" viewBox="0 0 16 16"><path d="M1.500 1.500h6v6h-6zM1.500 8.500h6v6h-6zM8.500 8.500h6v6h-6z" fill="#fff" stroke="#12246c"/><path d="M4.500 3v10M5 11.500h7" stroke="#12246c"/><circle cx="4.500" cy="4.500" r="1.500"/><circle cx="4.500" cy="11.500" r="1.500"/><circle cx="11.500" cy="11.500" r="1.500"/></symbol>
  <symbol id="t-ball" viewBox="0 0 16 16"><path d="M9 5l5 1 2 8-4 1z" fill="#2f5a80"/><circle cx="5.500" cy="6.500" r="5" fill="#6fae5c" stroke="#1e3c1a"/><circle cx="4.500" cy="5" r="2" fill="#c6e6b4"/><path d="M4.500 7.500h8v7h-8z" fill="#e4e4e4" stroke="#333"/></symbol>
  <symbol id="t-fn" viewBox="0 0 16 16"><path d="M1 1h6v6H1z" fill="#ddd" stroke="#666" stroke-dasharray="1 1"/><path d="M0 9h6v7H0z" fill="#f0a83c"/><path d="M6 6h10v10H6z" fill="#6bb0e8" stroke="#2c6ab0"/><path d="M8 14c2 0 2-7 4-6M8 11h3M11 11l3 3M14 11l-3 3" stroke="#102c6c" fill="none"/><path d="M2 6l3-4" stroke="#38a038"/></symbol>
  <symbol id="t-cyl" viewBox="0 0 16 16"><path d="M4 3v9h9V3" fill="#8fb4e0" stroke="#3c5c90"/><ellipse cx="8" cy="3" rx="4.500" ry="2" fill="#c8dcf4" stroke="#3c5c90"/><path d="M1.500 8.500h7v6h-7z" fill="#a8c0f0" stroke="#24408c"/></symbol>
  <symbol id="t-perm" viewBox="0 0 16 16"><path d="M2 3v11h9V3" fill="#7fb0dc" stroke="#30598c"/><ellipse cx="6.500" cy="3" rx="4.500" ry="2" fill="#cfe4f6" stroke="#30598c"/><circle cx="11" cy="9" r="2.500" fill="#ffd878" stroke="#b87818"/><path d="M11 11v5M11 14h2" stroke="#c08420" stroke-width="1.500"/></symbol>
  <symbol id="t-rel" viewBox="0 0 16 16"><path d="M2 1v5h4M8 6h4v6" fill="none" stroke="#14206c" stroke-width="1.200"/><path d="M9 12l3-3 2 3-2 3z" fill="#3450b0"/></symbol>
  <symbol id="t-sch" viewBox="0 0 16 16"><path d="M2.500 2.500h11v12h-11z" fill="#fff8dc" stroke="#a08840"/><path d="M6 4h4v3H6zM4 10h3v3H4zM9 10h3v3H9zM5.500 10V8.500h5V10" fill="#8cb4ec" stroke="#2a5cb0"/></symbol>
  <symbol id="t-scr" viewBox="0 0 16 16"><path d="M2 2h10v3h-1v9H3V5H2z" fill="#b8c8e8" stroke="#3c5488"/><path d="M5 7h5M5 9.500h5" stroke="#c03030"/><path d="M2 14h9" stroke="#3c5488" stroke-width="2"/></symbol>
  <symbol id="t-seq" viewBox="0 0 16 16"><path d="M.5 1.500h6v5h-6zM5.500 6.500h5v4h-5zM9.500 10.500h5v5h-5z" fill="#fff" stroke="#2a62a8"/></symbol>
  <symbol id="t-proc" viewBox="0 0 16 16"><path d="M.5 1.500h4v4h-4zM.5 10.500h4v4h-4z" fill="#9cc0e8" stroke="#24508c"/><path d="M2.500 5v6M5 4l4 4-4 4" stroke="#24508c" fill="none"/><path d="M9.500 6.500h5v8h-5z" fill="#a8ccf0" stroke="#24508c"/></symbol>
  <symbol id="t-area" viewBox="0 0 16 16"><path d="M1.500 15V1.500h13V6M4.500 15V4.500H11" fill="none" stroke="#2c4a70"/><path d="M7.500 8.500h7v6h-7z" fill="#bcd0ea" stroke="#2c4a70"/></symbol>
  <symbol id="t-keys" viewBox="0 0 16 16"><circle cx="5" cy="5" r="3" fill="#ffd070" stroke="#b07818" stroke-width="1.500"/><circle cx="4" cy="11" r="3" fill="#ddd" stroke="#707070" stroke-width="1.500"/><path d="M7 9.500h9M7 12h6v2" stroke="#888" stroke-width="1.500" fill="none"/></symbol>
  <symbol id="t-syn" viewBox="0 0 16 16"><path d="M.5 1.500h9v5h-5l-2 2v-2h-2z" fill="#eef0b0" stroke="#7c8030"/><path d="M5.500 8.500h9v5h-1v2l-2-2h-6z" fill="#eef0b0" stroke="#7c8030"/><path d="M3 4h5M7 11h6" stroke="#7c8030"/></symbol>
  <symbol id="t-tab" viewBox="0 0 16 16"><path d="M1.500 2.500h13v11h-13z" fill="#b8c4f0" stroke="#14246c"/><path d="M2 3h12v3H2z" fill="#eef2ff"/><path d="M2 7h12" stroke="#14246c" stroke-width="1.500"/></symbol>
  <symbol id="t-theme" viewBox="0 0 16 16"><path d="M1 8l3-7 3 7M2 5.500h4" fill="none" stroke="#a8289c" stroke-width="2"/><path d="M5 15l4-10 4 10M6.500 11.500h5M3.500 15h4M11 15h4.500" fill="none" stroke="#2c6cc0" stroke-width="1.800"/></symbol>
  <symbol id="t-tmpl" viewBox="0 0 16 16"><path d="M1 1h10v3H1z" fill="#3c7ab8"/><path d="M2.500 4.500h11v10h-11z" fill="#d4e2f0" stroke="#40587c"/><path d="M4 9h5v4H4z" fill="#e89848" stroke="#603410"/><path d="M7 7h4v4H7z" fill="#eee" stroke="#444"/></symbol>
  <symbol id="t-trig" viewBox="0 0 16 16"><path d="M1.500 8.500h7v6h-7z" fill="#e89848" stroke="#7c3c10"/><path d="M6 3h3v8h5v-3" fill="none" stroke="#555" stroke-width="2"/></symbol>
  <symbol id="t-uid" viewBox="0 0 16 16"><path d="M0 2h9v12H0z" fill="#f4cc50" stroke="#c08c18"/><path d="M3 16c0-4 2-5 6-5s7 1 7 5z" fill="#4a96ea"/><circle cx="9" cy="8" r="3" fill="#f0c8a0"/><path d="M6 8c0-5 6-5 6 0-2-2-4-2-6 0z" fill="#3c2818"/></symbol>
  <symbol id="t-rule" viewBox="0 0 16 16"><path d="M2 2.500h11v10H2z" fill="#eee" stroke="#666"/><path d="M3.500 3.500h8v3h-8z" fill="#e8b058" stroke="#8c5c18"/><path d="M4 9h5" stroke="#777"/><path d="M6 10l3 4 5-6" fill="none" stroke="#222" stroke-width="1.600"/></symbol>
  <symbol id="t-view" viewBox="0 0 16 16"><rect x="1.500" y="2.500" width="13" height="12" rx="3" fill="url(#gs)" stroke="#3048a0" stroke-dasharray="2 1"/></symbol>
  <symbol id="doc" viewBox="0 0 16 16"><path d="M3.500 1.500h5l4 4v10h-9z" fill="#fffef0" stroke="#111"/><path d="M8.500 1.500v4h4" fill="none" stroke="#111"/></symbol>
  <symbol id="tri" viewBox="0 0 16 16"><path d="M8 1l6.500 12h-13z" fill="#10c8c8" stroke="#0a8888"/></symbol>
  <symbol id="ok" viewBox="0 0 16 16"><rect x="1" y="1" width="14" height="14" rx="2" fill="#18962c" stroke="#0a3c12" stroke-width="1.500"/><path d="M4 7l3 4 6-8" fill="none" stroke="#fff" stroke-width="2"/><path d="M4 13h8" stroke="#a8e8b0"/></symbol>
  <symbol id="pin" viewBox="0 0 16 16"><path d="M6.500 3.500h4v6h-4zM4 9.500h9M8.500 10v4" fill="none" stroke="#000" stroke-width="1.200"/><path d="M9.500 3.500v6" stroke="#000"/></symbol>
  <symbol id="ex" viewBox="0 0 16 16"><path d="M4.500 4.500l7 7M11.500 4.500l-7 7" stroke="#000" stroke-width="1.700"/></symbol>
  <symbol id="aup" viewBox="0 0 19 20"><path d="M5 13l4.500-5 4.500 5" fill="none" stroke="#555" stroke-width="2"/></symbol>
  <symbol id="adn" viewBox="0 0 19 20"><path d="M5 8l4.500 5L14 8" fill="none" stroke="#555" stroke-width="2"/></symbol>
  <symbol id="alf" viewBox="0 0 19 20"><path d="M12 5l-5 4.500L12 14" fill="none" stroke="#555" stroke-width="2"/></symbol>
  <symbol id="art" viewBox="0 0 19 20"><path d="M7 5l5 4.500L7 14" fill="none" stroke="#555" stroke-width="2"/></symbol>
</svg>

<header>
  <div class="titlebar d-flex align-items-center">
    <svg width="20" height="20" viewBox="0 0 20 20" aria-hidden="true"><path d="M0 0h20v20H0z" fill="#0f9ec8"/><path d="M3 3h4v3H3zM8 3h4v3H8zM13 3h4v3h-4zM3 8h4v4H3zM8 8h4v4H8zM13 8h4v4h-4zM3 14h4v3H3zM8 14h4v3H8zM13 14h4v3h-4z" fill="#fff"/><path d="M11 4.500h3M4.500 11v4M6 15.500h8" stroke="#fff"/></svg>
    <h1 class="ms-1 me-auto">erwin DM - [Model2019.erwin : ER_Diagram_163 * ]</h1>
    <button class="win-ctl d-flex align-items-center justify-content-center" aria-label="Minimize"><svg width="12" height="12"><path d="M0 5.500h12" stroke="#000"/></svg></button>
    <button class="win-ctl d-flex align-items-center justify-content-center" aria-label="Restore"><svg width="12" height="12"><path d="M.5 3.500h8v8h-8zM3 3V.5h8.500V9H9" fill="none" stroke="#000"/></svg></button>
    <button class="win-ctl d-flex align-items-center justify-content-center" aria-label="Close"><svg width="12" height="12"><path d="M0 0l12 12M12 0L0 12" stroke="#000"/></svg></button>
  </div>
  <div class="chrome">
    <nav class="menubar d-flex align-items-center" aria-label="Menu">
      <a href="#">File</a><a href="#">Edit</a><a href="#">View</a><a href="#">Diagram</a><a href="#">Model</a><a href="#">Actions</a><a href="#">Tools</a><a href="#">Window</a><a href="#" class="me-auto">Help</a>
      <button class="mdi-ctl" aria-label="Minimize diagram"><svg width="16" height="16"><path d="M4 12h7" stroke="#000" stroke-width="2"/></svg></button>
      <button class="mdi-ctl" aria-label="Restore diagram"><svg width="16" height="16"><path d="M3.500 7.500h6v4h-6zM6 7V4.500h6v4h-2M6 4.500h6M3.500 7.500h6" fill="none" stroke="#000" stroke-width="1.400"/></svg></button>
      <button class="mdi-ctl" aria-label="Close diagram"><svg width="16" height="16"><path d="M4 4l8 8M12 4l-8 8" stroke="#000" stroke-width="2.500"/></svg></button>
    </nav>
    <div class="bar-row d-flex">
      <div class="strip" data-tools="new open save - print - find replace - undo redo."></div>
      <div class="strip g3" data-tools="pointer! table view rel1 rel2 rel3 text anno"></div>
      <div class="strip g67" data-tools="@fonts - bold. italic. underline. strike. - fontcolor.> fill> brush.> - lines.> dashes.> ends.>"></div>
      <div class="strip g12" data-tools="fwd. back. - lockg.> - shield. - cmp. sync. look. - net1. net2. keyg. tree4."></div>
    </div>
    <div class="bar-row d-flex">
      <div class="strip" data-tools="al-t al-b al-m al-l al-r al-c"></div>
      <div class="strip g16" data-tools="ly1 ly2 ly3 ly4 ly5 ly6 ly7"></div>
      <div class="strip g20" data-tools="z-out z-in z-100 z-fit z-sel"></div>
      <div class="strip g8" data-tools="ent ent2 ent3 ent4 ent5 - area> - @level"></div>
      <div class="strip g36" data-tools="db1 db2 db3 db4 db5"></div>
      <div class="strip g12" data-tools="sh-rect sh-round sh-oval sh-pent sh-hex sh-oct sh-up sh-down sh-left sh-right sh-dia sh-para sh-star sh-plus anno sh-elbow"></div>
      <div class="strip g8" data-tools="ar1. ar2. ar3. ar4. ar5. ar6. ar7. ar8. target"></div>
      <div class="strip g16" data-tools="m-lock m-free. - m-up. - m-c."></div>
    </div>
  </div>
</header>

<main class="flex-grow-1 d-flex flex-column">
  <div class="d-flex flex-grow-1">
    <section class="explorer d-flex flex-column" aria-label="Model Explorer">
      <div class="pane-head d-flex align-items-center"><h2 class="me-auto">Model Explorer</h2><button aria-label="Pin"><svg width="16" height="16"><use href="#pin"/></svg></button><button aria-label="Close"><svg width="16" height="16"><use href="#ex"/></svg></button></div>
      <div class="pane-body flex-grow-1 d-flex flex-column">
        <div class="mini d-flex align-items-center" data-mini="prev. next. - props trash - find - help"></div>
        <div class="frame flex-grow-1 d-flex flex-column">
          <div class="listbox flex-grow-1 d-flex">
            <ul class="tree flex-grow-1" id="tree"></ul>
            <div class="vbar d-flex flex-column"><button aria-label="Scroll up"><svg width="19" height="20"><use href="#aup"/></svg></button><div class="spread-204"></div><div class="thumb spread-219"></div><div class="spread-6"></div><button aria-label="Scroll down"><svg width="19" height="20"><use href="#adn"/></svg></button></div>
          </div>
        </div>
        <div class="d-flex">
          <button class="pane-tab on d-flex align-items-center"><svg width="16" height="16"><use href="#doc"/></svg>Model</button>
          <button class="pane-tab d-flex align-items-center"><svg width="15" height="15"><use href="#area"/></svg>Subject Area</button>
        </div>
      </div>
    </section>
    <section class="canvas-pane flex-grow-1 d-flex flex-column" aria-label="Diagram">
      <div class="d-flex flex-grow-1">
        <div class="desk flex-grow-1 d-flex"><div class="paper position-relative" data-erd="at-page"></div></div>
        <div class="vbar desk-bar d-flex flex-column"><button aria-label="Scroll up"><svg width="19" height="20"><use href="#aup"/></svg></button><div class="thumb spread-419"></div><div class="spread-47"></div><button aria-label="Scroll down"><svg width="19" height="20"><use href="#adn"/></svg></button></div>
      </div>
      <div class="hbar d-flex"><button aria-label="Scroll left"><svg width="19" height="20"><use href="#alf"/></svg></button><div class="spread-6"></div><div class="thumb spread-1518"></div><button aria-label="Scroll right"><svg width="19" height="20"><use href="#art"/></svg></button></div>
      <div class="sheet-tabs d-flex">
        <button class="sheet-tab d-flex align-items-start"><svg width="11" height="23"><path d="M0 0h11v23h-1z" fill="#fff"/><path d="M.5 0L10 22.500h1" fill="none" stroke="#000"/></svg><span>ER_Diagram_163</span><svg width="12" height="23"><path d="M0 0h12L2 23H0z" fill="#fff"/><path d="M0 22.500h2L11.500 0" fill="none" stroke="#000"/></svg></button>
      </div>
    </section>
  </div>

  <div class="dock d-flex">
    <section class="dock-log d-flex flex-column" aria-label="Action Log">
      <div class="pane-head d-flex align-items-center"><h2 class="me-auto">Action Log</h2><button aria-label="Pin"><svg width="16" height="16"><use href="#pin"/></svg></button><button aria-label="Close"><svg width="16" height="16"><use href="#ex"/></svg></button></div>
      <div class="pane-body flex-grow-1 d-flex flex-column">
        <div class="mini roomy d-flex align-items-center" data-mini="logi. - find findn. - note. - props. - lund lred. - filter - help"></div>
        <div class="frame flex-grow-1 d-flex flex-column">
          <div class="listbox flex-grow-1 d-flex">
            <ul class="log flex-grow-1" id="log"></ul>
            <div class="vbar d-flex flex-column"><button aria-label="Scroll up"><svg width="19" height="20"><use href="#aup"/></svg></button><div class="thumb spread-26"></div><div class="spread-224"></div><button aria-label="Scroll down"><svg width="19" height="20"><use href="#adn"/></svg></button></div>
          </div>
        </div>
        <div class="d-flex">
          <button class="pane-tab on d-flex align-items-center"><svg width="16" height="16"><use href="#logi"/></svg>Details</button>
          <button class="pane-tab d-flex align-items-center"><svg width="15" height="15"><use href="#tri"/></svg>Summary</button>
        </div>
      </div>
    </section>
    <section class="dock-adv d-flex flex-column" aria-label="Advisories">
      <div class="pane-head d-flex align-items-center"><h2 class="me-auto">Advisories</h2><button aria-label="Pin"><svg width="16" height="16"><use href="#pin"/></svg></button><button aria-label="Close"><svg width="16" height="16"><use href="#ex"/></svg></button></div>
      <div class="pane-body flex-grow-1 d-flex flex-column">
        <div class="mini d-flex align-items-center" data-mini="save note help"></div>
        <div class="listbox flex-grow-1"><div class="rowline adv-row picked-row d-flex align-items-center"><svg width="15" height="15"><use href="#ok"/></svg><span class="caption">Set Model property Logical Physical View Mode</span></div></div>
      </div>
    </section>
    <section class="flex-grow-1 d-flex flex-column" aria-label="Overview">
      <div class="pane-head d-flex align-items-center"><h2 class="me-auto">Overview</h2><button aria-label="Pin"><svg width="16" height="16"><use href="#pin"/></svg></button><button aria-label="Close"><svg width="16" height="16"><use href="#ex"/></svg></button></div>
      <div class="pane-body bg-white flex-grow-1 position-relative overflow-hidden" data-erd="at-view"><div class="view-box"></div><div class="view-dot"></div></div>
    </section>
  </div>
</main>

<footer class="status d-flex align-items-center">
  <span class="me-auto">For Help, press F1</span>
  <span class="s-mart d-flex align-items-center"><svg width="18" height="16" viewBox="0 0 18 16"><path d="M.5 1.500h6v4h-6zM.5 10.500h6v4h-6z" fill="#9cc0e8" stroke="#24406c"/><path d="M3 5v6M6 3h3v9H6" fill="none" stroke="#333"/><path d="M8 5h6v9H8z" fill="#f0b828" stroke="#a87408"/></svg>Non-Mart Model</span>
  <span class="cell s-gap"></span>
  <span class="cell s-db">SQL Server 2016/2017</span>
  <label class="cell s-zoom" for="zoom">100%</label>
  <span class="cell d-flex align-items-center ps-1">
    <button class="flex-shrink-0" aria-label="Zoom out"><svg width="15" height="15"><circle cx="7.500" cy="7.500" r="7" fill="#f4f4f4" stroke="#999"/><path d="M4 7.500h7" stroke="#000" stroke-width="2"/></svg></button>
    <input class="zoom" type="range" id="zoom" min="0" max="200" value="100">
    <button class="flex-shrink-0" aria-label="Zoom in"><svg width="15" height="15"><circle cx="7.500" cy="7.500" r="7" fill="#f4f4f4" stroke="#999"/><path d="M4 7.500h7M7.500 4v7" stroke="#000" stroke-width="2"/></svg></button>
  </span>
</footer>

<template id="erd">
  <div class="erd">
    <svg class="link-line" width="160" height="16" viewBox="0 0 160 16" fill="none" stroke="#0a0a50"><path d="M0 2l10 5.500L0 13M0 7.500h10M10.500 0v15"/><circle cx="15" cy="7.500" r="5"/><path d="M10 7.500h15"/><path d="M30 7.500h102" stroke-dasharray="14 5"/><circle cx="144.500" cy="7.500" r="5"/><path d="M132 7.500h7M150.500 0v15M145 7.500h15"/></svg>
    <div class="entity e-product"><h3>ProductDetails</h3><div class="sheet"><div class="keys fw-bold">ProductID</div><div class="cols">ProductName<br><span class="fk">CategoriesID (FK)</span><br>ProductSIZE<br>ProductWEIGHT</div></div></div>
    <div class="entity e-category"><h3>Categories</h3><div class="sheet orange"><div class="keys">CategoriesID</div><div class="cols">CategoriesName</div></div></div>
    <div class="entity e-customer"><h3>Customers</h3><div class="sheet"><div class="keys">CustomersID</div><div class="cols">CustomersLastName<br>CustomersFirstName</div></div></div>
  </div>
</template>

<script>
  const icon = (id, size) => `<svg width="${size}" height="${size}" aria-hidden="true"><use href="#${id}"/></svg>`;
  const widgets = {
    '@fonts': '<select class="combo w-face" aria-label="Font" disabled></select><select class="combo w-size" aria-label="Font size" disabled></select>',
    '@level': '<select class="combo live" aria-label="Model level"><option>Physical</option></select>'
  };
  // Token suffixes: "." disabled, "!" selected, ">" has a drop-down arrow.
  function buildTools(spec, size) {
    return spec.split(' ').map(t => {
      if (t === '-') return '<span class="split"></span>';
      if (widgets[t]) return widgets[t];
      const id = t.replace(/[.!>]/g, '');
      const off = t.includes('.');
      const cls = (off ? ' off' : '') + (t.includes('!') ? ' picked' : '') + (t.includes('>') ? ' wide' : '');
      const arrow = t.includes('>') ? '<svg width="5" height="3" class="ms-1"><path d="M0 0h5L2.500 3z"/></svg>' : '';
      return `<button class="tool d-flex align-items-center justify-content-center${cls}" aria-label="${id}"${off ? ' disabled' : ''}>${icon(id, size)}${arrow}</button>`;
    }).join('');
  }
  document.querySelectorAll('[data-tools]').forEach(el => {
    el.classList.add('d-flex', 'align-items-center');
    el.innerHTML = '<span class="grip"></span>' + buildTools(el.dataset.tools, 20) +
      '<button class="more d-flex align-items-end justify-content-center pb-1" aria-label="More buttons"><svg width="5" height="6"><path d="M0 0h5v1H0zM0 3h5L2.500 6z"/></svg></button>';
  });
  document.querySelectorAll('[data-mini]').forEach(el => { el.innerHTML = buildTools(el.dataset.mini, 16); });

  const box = sign => `<svg width="9" height="9"><path d="M.5.5h8v8h-8z" fill="#fff" stroke="#919191"/><path d="M2 4.500h5${sign === '+' ? 'M4.500 2v5' : ''}" stroke="#33509c"/></svg>`;
  const tree = [
    ['+','t-user','Logins'],['','t-src','Model Sources'],['','t-ball','Naming Standards'],['','t-fn','Partition Functions'],['','t-cyl','Partition Schemes'],
    ['','t-perm','Permissions'],['+','t-rel','Relationships'],['+','t-ball','Resource Pools'],['+','t-sch','Schemas'],['','t-scr','Script Templates'],
    ['','t-seq','Sequences'],['','t-ball','Server Audit Specifications'],['','t-ball','Server Audits'],['','t-proc','Stored Procedures'],['','t-area','Subject Areas'],
    ['','t-keys','Symmetric Keys'],['','t-syn','Synonyms'],['+','t-tab','Tables'],['+','t-theme','Themes'],['+','t-tmpl','Trigger Templates'],
    ['','t-trig','Triggers'],['+','t-uid','User Ids'],['-','t-rule','Validation Rules'],['leaf','t-rule','Marital_Status_Rule'],['','t-view','Views'],['+','t-ball','Workload Groups']];
  document.getElementById('tree').innerHTML = tree.map(([state, id, name]) => state === 'leaf'
    ? `<li class="rowline d-flex align-items-center picked-row"><span class="twig thru"></span><span class="twig leaf ms-1"></span>${icon(id, 16)}<span class="caption ms-1">${name}</span></li>`
    : `<li class="rowline d-flex align-items-center"><span class="twig">${state ? box(state) : ''}</span><svg width="16" height="16" aria-hidden="true"><use href="#${id}"/><use href="#star8"/></svg><span class="caption ms-1">${name}</span></li>`).join('');

  const log = ['Set Model property Logical Physical View Mode','Set Check Constraint Usage property Physical Name','Set Check Constraint Usage property With Check','Set Valid Value property Display','Set Valid Value property Name','Create Valid Value','Set Valid Value property Display','Set Valid Value property Name','Create Valid Value','Set Validation Rule property Type',"Delete Validation Rule 'Validation_Rule_207'",'Create Validation Rule','Set Validation Rule property Name','Create Validation Rule','Create Validation Rule','Set Domain property Check Constraint Inheritance Prohibited'];
  document.getElementById('log').innerHTML = log.map((name, i) =>
    `<li class="rowline d-flex align-items-center${i ? '' : ' picked-row'}"><span class="twig">${box('+')}</span>${icon('logi', 17)}<span class="caption ms-1">${name}</span></li>`).join('');

  document.querySelectorAll('[data-erd]').forEach(host => {
    const copy = document.getElementById('erd').content.cloneNode(true);
    copy.querySelector('.erd').classList.add(host.dataset.erd);
    host.prepend(copy);
    if (host.dataset.erd === 'at-view') host.insertAdjacentHTML('beforeend', '<div class="mark-v"></div>');
  });
</script>
</body>
</html>
